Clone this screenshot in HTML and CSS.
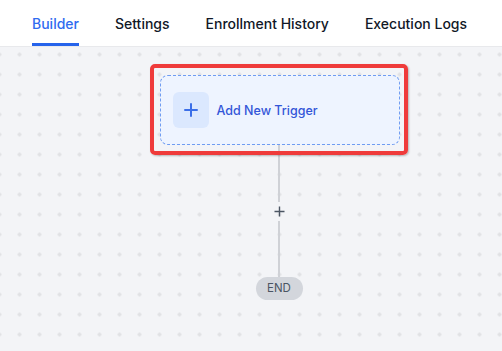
FILE: index.html
```html
<!DOCTYPE html>
<html>
<head>
    <title>Workflow Builder</title>
    <link rel="stylesheet" href="styles.css">
</head>
<body>
    <div class="tabs">
        <div class="tab active">Builder</div>
        <div class="tab">Settings</div>
        <div class="tab">Enrollment History</div>
        <div class="tab">Execution Logs</div>
    </div>
    <div class="canvas">
        <div class="trigger">
            <div class="trigger-icon">
                <svg width="14" height="14" viewBox="0 0 14 14"><path d="M7 1v12M1 7h12" stroke="#3b6fe8" stroke-width="2" stroke-linecap="round"/></svg>
            </div>
            <span class="trigger-label">Add New Trigger</span>
        </div>
        <div class="line line-top"></div>
        <div class="add-step">
            <svg width="11" height="11" viewBox="0 0 11 11"><path d="M5.5 0.5v10M0.5 5.5h10" stroke="#4b5563" stroke-width="1.4"/></svg>
        </div>
        <div class="line line-bottom"></div>
        <div class="end">END</div>
    </div>
</body>
</html>
```

FILE: styles.css
```css
body {
    margin: 0;
    font-family: Inter, 'Noto Sans', sans-serif;
    background-color: #f3f4f7;
    height: 351px;
    overflow: hidden;
}
.tabs {
    display: flex;
    gap: 36px;
    padding: 0 32px;
    height: 46px;
    background-color: #fff;
    border-bottom: 1px solid #e8e9ec;
}
.tab {
    display: flex;
    align-items: center;
    flex-shrink: 0;
    white-space: nowrap;
    font-size: 14px;
    font-weight: 500;
    color: #111827;
    border-bottom: 3px solid transparent;
    padding-top: 3px;
}
.tab.active {
    color: #2f6bf0;
    border-bottom-color: #2563eb;
}
.canvas {
    display: flex;
    flex-direction: column;
    align-items: center;
    height: 304px;
    padding-top: 28px;
    padding-left: 56px;
    box-sizing: border-box;
    background-color: #f3f4f7;
    background-image: radial-gradient(circle, #e1e2e5 1.6px, transparent 2px);
    background-size: 20px 20px;
    background-position: 9.5px -2.5px;
}
.trigger {
    position: relative;
    display: flex;
    align-items: center;
    gap: 8px;
    width: 240px;
    height: 70px;
    box-sizing: border-box;
    padding: 0 12px;
    margin-left: 1px;
    background-color: #eef4ff;
    border: 1px dashed #6f9cf2;
    border-radius: 8px;
}
.trigger::after {
    content: '';
    position: absolute;
    top: -12px;
    left: -11px;
    right: -9px;
    bottom: -11px;
    border: 4px solid #ef3b3b;
    border-radius: 5px;
    box-shadow: 1px 1px 2px rgba(0, 0, 0, 0.25);
}
.trigger-icon {
    display: flex;
    align-items: center;
    justify-content: center;
    width: 36px;
    height: 36px;
    border-radius: 6px;
    background-color: #dbe8fe;
}
.trigger-label {
    font-size: 12.5px;
    font-weight: 500;
    color: #3356d8;
}
.line {
    width: 2px;
    background-color: #cfd1d6;
}
.line-top {
    height: 57px;
}
.add-step {
    display: flex;
    align-items: center;
    justify-content: center;
    height: 19px;
}
.line-bottom {
    height: 56px;
}
.end {
    width: 47px;
    height: 23px;
    line-height: 23px;
    text-align: center;
    border-radius: 12px;
    background-color: #d3d6dc;
    color: #4b5563;
    font-size: 11.5px;
}
```
